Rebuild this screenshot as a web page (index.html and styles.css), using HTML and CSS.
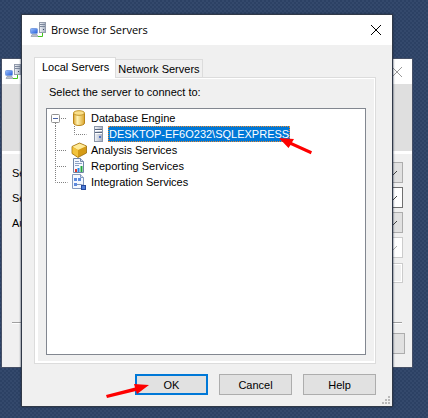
FILE: index.html
```html
<!DOCTYPE html>
<html lang="en">
<head>
<meta charset="utf-8">
<title>Browse for Servers</title>
<link rel="stylesheet" href="styles.css">
</head>
<body>
<svg class="defs" aria-hidden="true">
  <defs>
    <linearGradient id="gold" x1="0" x2="1"><stop offset="0" stop-color="#d9a02a"/><stop offset=".35" stop-color="#fff3b4"/><stop offset="1" stop-color="#dba52b"/></linearGradient>
    <linearGradient id="steel" x1="0" x2="1"><stop offset="0" stop-color="#f4f6fa"/><stop offset="1" stop-color="#a5afc1"/></linearGradient>
    <linearGradient id="screen" x1="0" x2="1" y2="1"><stop offset="0" stop-color="#9cc4ff"/><stop offset="1" stop-color="#2259d8"/></linearGradient>
    <symbol id="connect" viewBox="0 0 16 16">
      <rect x="9.5" y=".5" width="6" height="10" fill="url(#steel)" stroke="#949cac"/>
      <path d="M10 2.500h5M10 4.500h5" stroke="#7d889c"/>
      <rect x="13" y="7" width="1" height="1" fill="#3a4660"/>
      <rect x=".5" y="6.500" width="7" height="5" rx="1" fill="url(#screen)" stroke="#7d9fe0"/>
      <path d="M2 12.500h5l1 2H1z" fill="#b9c0cd" stroke="#8a92a0" stroke-width=".6"/>
      <path d="M8 14.500h4.500v-3.500" fill="none" stroke="#43c51c"/>
    </symbol>
  </defs>
</svg>

<section class="window back" aria-label="Connect to Server">
  <header class="titlebar">
    <svg class="app-icon"><use href="#connect"/></svg>
    <button class="close" aria-label="Close"><svg viewBox="0 0 12 12"><path d="M1 1l10 10M11 1L1 11"/></svg></button>
  </header>
  <div class="banner"></div>
  <form class="fields">
    <div class="field"><label for="f1">Se</label><div class="combo gray"><select id="f1"></select><svg viewBox="0 0 10 6"><path d="M1 1l4 4 4-4"/></svg></div></div>
    <div class="field"><label for="f2">Se</label><div class="combo"><select id="f2"></select><svg viewBox="0 0 10 6"><path d="M1 1l4 4 4-4"/></svg></div></div>
    <div class="field"><label for="f3">Au</label><div class="combo gray"><select id="f3"></select><svg viewBox="0 0 10 6"><path d="M1 1l4 4 4-4"/></svg></div></div>
    <div class="field"><span></span><div class="combo off"><select aria-label="User" disabled></select><svg viewBox="0 0 10 6"><path d="M1 1l4 4 4-4"/></svg></div></div>
    <div class="field"><span></span><input class="secret" type="password" aria-label="Password" disabled></div>
  </form>
  <hr>
  <div class="back-actions"><button class="btn" aria-label="Options"></button></div>
</section>

<section class="window front" role="dialog" aria-labelledby="title">
  <header class="titlebar">
    <svg class="app-icon"><use href="#connect"/></svg>
    <h1 id="title">Browse for Servers</h1>
    <button class="close" aria-label="Close"><svg viewBox="0 0 12 12"><path d="M1 1l10 10M11 1L1 11"/></svg></button>
  </header>
  <div class="content">
    <div class="tabs" role="tablist">
      <button class="tab active" role="tab" aria-selected="true">Local Servers</button>
      <button class="tab" role="tab" aria-selected="false">Network Servers</button>
    </div>
    <div class="page"><div class="pane" role="tabpanel">
      <p id="prompt">Select the server to connect to:</p>
      <ul class="tree" role="tree" aria-labelledby="prompt">
        <li class="node" role="treeitem">
          <svg class="branch" viewBox="0 0 24 16"><path class="dots" d="M8.500 13v3M14 8.500h6"/><rect x="4.500" y="4.500" width="8" height="8" rx="1" fill="#fff" stroke="#919191"/><path d="M6 8.500h5" stroke="#4b63a7"/></svg>
          <svg class="icon" viewBox="0 0 16 16"><path d="M2.500 3v10c0 3.300 11 3.300 11 0V3" fill="url(#gold)" stroke="#b98418"/><ellipse cx="8" cy="3" rx="5.500" ry="2.300" fill="#fbe08a" stroke="#c3962c"/></svg>
          <span>Database Engine</span>
        </li>
        <li class="node child" role="treeitem" aria-selected="true">
          <svg class="branch" viewBox="0 0 43 16"><path class="dots" d="M8.500 0v16M27.500 0v8.500h12"/></svg>
          <svg class="icon" viewBox="0 0 16 16"><rect x="4.500" y=".5" width="8" height="15" fill="url(#steel)" stroke="#8b96a8"/><path d="M5 3.500h7M5 6.500h7" stroke="#59677f"/><path d="M5 4.500h7M5 7.500h7" stroke="#fff"/><rect x="9" y="10" width="2" height="2" fill="#4f6fc0"/></svg>
          <span class="selected">DESKTOP-EF6O232\SQLEXPRESS</span>
        </li>
        <li class="node" role="treeitem">
          <svg class="branch" viewBox="0 0 24 16"><path class="dots" d="M8.500 0v16M10 8.500h10"/></svg>
          <svg class="icon" viewBox="0 0 16 16"><path d="M1 4.500L8.500 1 15.500 4v7L7 15.500 1 11.500z" fill="#d59b16" stroke="#9b6c0a" stroke-width=".8"/><path d="M1.500 4.700L8.500 1.500 15 4.200 7 8z" fill="#ffeb9a"/><path d="M1.500 5L7 8v7l-5.500-3.700z" fill="#f2c33c"/></svg>
          <span>Analysis Services</span>
        </li>
        <li class="node" role="treeitem">
          <svg class="branch" viewBox="0 0 24 16"><path class="dots" d="M8.500 0v16M10 8.500h10"/></svg>
          <svg class="icon" viewBox="0 0 16 16"><path d="M2.500.5h7l3 3v11h-10z" fill="#f4f8ff" stroke="#7085a6"/><path d="M9.500.5v3h3" fill="#c9d6ea" stroke="#7085a6"/><path d="M4 3.500h4M4 5.500h7M4 7.500h4" stroke="#8da2c4"/><path d="M4 11h2v3H4z" fill="#e2382c"/><path d="M6.500 10h2v4h-2z" fill="#258be8"/><path d="M9.500 8h2v6h-2z" fill="#25a83c"/></svg>
          <span>Reporting Services</span>
        </li>
        <li class="node" role="treeitem">
          <svg class="branch" viewBox="0 0 24 16"><path class="dots" d="M8.500 0v8.500h12"/></svg>
          <svg class="icon" viewBox="0 0 16 16"><path d="M1.500.5h8l3 3v11h-11z" fill="#f4f8ff" stroke="#8499bd"/><path d="M9.500.5v3h3" fill="#d5e0f0" stroke="#8499bd"/><path d="M3 4h3v3H3zM7 4h3v3H7zM3 9h3v3H3z" fill="#5d8ade"/><path d="M6 10.500h4l3 1" fill="none" stroke="#8195b8"/><rect x="10.500" y="11.500" width="4" height="4" fill="#4c7bd8" stroke="#26499c"/></svg>
          <span>Integration Services</span>
        </li>
      </ul>
    </div></div>
    <div class="actions">
      <button class="btn primary">OK</button>
      <button class="btn">Cancel</button>
      <button class="btn">Help</button>
    </div>
  </div>
  <svg class="grip" viewBox="0 0 8 8"><path d="M6 0h2v2H6zM3 3h2v2H3zM6 3h2v2H6zM0 6h2v2H0zM3 6h2v2H3zM6 6h2v2H6z" fill="#b9b9b9"/></svg>
  <svg class="arrow to-server" viewBox="0 0 34 18"><path d="M0 1l15 1-2 3.200 20 9-1.200 3L11.500 8l-2 3z" fill="#fe0000"/></svg>
  <svg class="arrow to-ok" viewBox="0 0 44 14"><path d="M43 1L28 0l1 3.500L0 11l1 3 29-7 1 3z" fill="#fe0000"/></svg>
</section>
</body>
</html>
```
FILE: styles.css
```css
* { box-sizing: border-box; }

body {
  margin: 0;
  min-height: 100vh;
  overflow: hidden;
  color: #000;
  font: 11px/16px "Liberation Sans", Arial, sans-serif;
  background:
    radial-gradient(circle at 1px 1px, #2c4164 1px, transparent 1px) 0 0 / 4px 4px,
    radial-gradient(circle at 1px 1px, #2c4164 1px, transparent 1px) 2px 2px / 4px 4px,
    #34496c;
}

svg { display: block; flex: none; }
.defs { position: absolute; width: 0; height: 0; }
button, input, select { margin: 0; padding: 0; font: inherit; color: inherit; }

.window { position: absolute; background: #f0f0f0; }
.front { left: 21px; right: 35px; top: 14px; border: 1px solid #303948; box-shadow: 0 0 2px #1d2a42; }
.back { left: 1px; right: 15px; top: 58px; border: 1px solid #465066; }

.titlebar { display: flex; align-items: center; height: 30px; padding: 0 10px 0 8px; background: #fff; }
.app-icon { width: 16px; height: 16px; }
h1 { margin: 0 0 0 5px; font: 11px/16px "Open Sans", "Noto Sans", sans-serif; }
.close { width: 12px; height: 12px; margin-left: auto; border: 0; background: none; }
.close path { fill: none; stroke: #000; stroke-width: 1; }

.content { padding: 12px 16px 11px 12px; }
.tabs { display: flex; align-items: flex-end; height: 20px; }
.tab { height: 18px; padding: 0 2px; border: 1px solid #dcdcdc; border-left: 0; border-bottom: 0; background: #f0f0f0; }
.tab.active { position: relative; height: 21px; padding: 0 6px 3px 7px; margin-bottom: -1px; border-left: 1px solid #dcdcdc; background: #fff; }
.page { padding: 1px 1px 2px 3px; border: 1px solid #dcdcdc; background: #fff; }
.pane { padding: 5px 8px 6px; background: #f0f0f0; }
.pane p { margin: 0 0 8px 3px; }

.tree { height: 247px; margin: 0; padding: 1px 0; list-style: none; background: #fff; border: 1px solid #828790; }
.node { display: flex; align-items: center; height: 16px; }
.branch { width: 24px; height: 16px; }
.child .branch { width: 43px; }
.dots { fill: none; stroke: #808080; stroke-dasharray: 1 1; }
.icon { width: 16px; height: 16px; }
.node span { padding-left: 4px; }
.node .selected { margin-left: 2px; padding: 0 1px; color: #fff; background: #0078d7; outline: 1px dotted #e98a31; outline-offset: -1px; }

.actions { display: flex; justify-content: flex-end; gap: 11px; margin-top: 10px; }
.btn { width: 73px; height: 21px; border: 1px solid #adadad; background: #e1e1e1; }
.primary { border: 2px solid #0078d7; }
.grip { position: absolute; right: 2px; bottom: 2px; width: 8px; height: 8px; }
.arrow { position: absolute; }
.to-server { left: 257px; top: 122px; width: 34px; height: 18px; }
.to-ok { left: 84px; top: 369px; width: 44px; height: 14px; }

.back .titlebar { height: 25px; padding: 0 9px 0 3px; }
.back .close path { stroke: #999; }
.banner { height: 70px; background: #dfdfdf; border-bottom: 3px solid #fff; }
.fields { display: grid; gap: 4px; padding: 8px 9px 0 10px; }
.field { display: grid; grid-template-columns: 120px 1fr; align-items: center; height: 21px; }
.combo { position: relative; height: 21px; border: 1px solid #707070; background: #fff; }
.combo.gray { border-color: #adadad; background: #e1e1e1; }
.combo.off { border-color: #ccc; }
.combo select { width: 100%; height: 100%; border: 0; background: transparent; appearance: none; }
.combo svg { position: absolute; right: 4px; top: 7px; width: 10px; height: 6px; }
.combo path { fill: none; stroke: #444; }
.combo.off path { stroke: #aaa; }
.secret { width: 100%; height: 20px; border: 1px solid #ccc; background: #f0f0f0; box-shadow: inset 0 0 0 1px #fff; }
hr { height: 2px; margin: 39px 10px 9px; border: 0; border-top: 1px solid #a0a0a0; background: #fff; }
.back-actions { display: flex; justify-content: flex-end; padding: 0 7px 13px; }
```
